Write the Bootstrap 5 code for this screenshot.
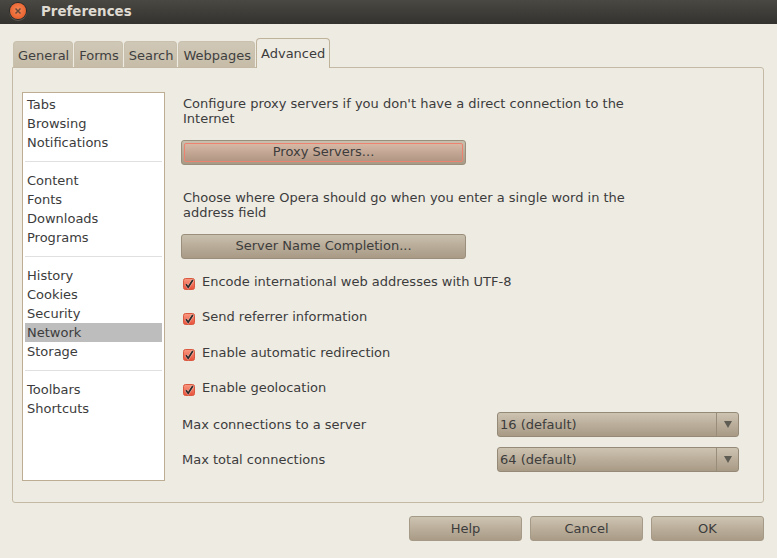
<!DOCTYPE html>
<html lang="en">
<head>
<meta charset="utf-8">
<title>Preferences</title>
<link href="https://cdn.jsdelivr.net/npm/bootstrap@5.3.0/dist/css/bootstrap.min.css" rel="stylesheet">
<style>
html,body{height:100%;}
body{width:777px;height:558px;overflow:hidden;background:#eeebe3;color:#3c3c3c;font-family:"DejaVu Sans",sans-serif;font-size:13px;line-height:15px;}
.win-title{height:24px;background:linear-gradient(#4a4843,#34322e);padding-left:10px;padding-bottom:2px;gap:15px;}
.win-close{width:16px;height:16px;border-radius:50%;background:radial-gradient(circle at 50% 45%,#f78a58,#e9602c 75%);box-shadow:0 0 0 1px #2c2a27,0 1px 0 1px #5c5954;}
.win-name{color:#dfdbd2;font-weight:700;font-size:13.4px;}
.win-body{padding:14px 13px 0 12px;}
.tab-strip{height:30px;padding-left:1px;gap:1px;align-items:flex-end;margin-bottom:-1px;position:relative;z-index:1;}
.tab-off{height:26px;background:linear-gradient(#d0c8b7,#c6bca8);border:1px solid #c9c0ae;border-bottom:0;border-radius:4px 4px 0 0;padding:6px 3px 0 4px;color:#3f3f3f;margin-bottom:1px;}
.tab-on{height:30px;background:#eeebe3;border:1px solid #bfb29b;border-bottom:0;border-radius:4px 4px 0 0;padding:7px 4px 0 4px;}
.pane{height:436px;border:1px solid #c4b9a4;border-radius:0 3px 3px 3px;padding:24px 24px 20px 9px;}
.side{width:143px;height:389px;background:#fff;border:1px solid #bdae93;padding:2px;flex:none;margin-right:16px;}
.side-item{height:19px;line-height:19px;padding-left:2px;color:#3c3c3c;}
.side-item.is-sel{background:#bdbdbd;}
.side-sep{height:1px;background:#e0e0de;margin:9px 0 9px;}
.main-col{flex:1;min-width:0;}
.para{width:470px;padding-left:2px;margin:0;line-height:15px;}
.para-first{margin-top:4px;}
.para-gap{margin-top:25px;}
.push{width:285px;height:25px;border:1px solid #9a8f7c;border-radius:3px;background:linear-gradient(#c9bfad,#a89a85);text-align:center;line-height:22px;color:#3c3c3c;padding:0;}
.push.is-focus{margin-top:14px;padding:2px;}
.focus-in{height:19px;border:1px solid #ee8270;border-radius:2px;background:linear-gradient(#d6b8a5,#b09683);line-height:16px;}
.push-gap{margin-top:14px;}
.tick-row{height:16px;margin-top:19.4px;gap:7px;padding-left:2px;}
.tick-first{margin-top:15px;}
.tick{width:12px;height:12px;flex:none;margin-top:4px;overflow:visible;}
.pick-row{height:25px;justify-content:space-between;padding-left:1px;}
.pick-first{margin-top:16px;}
.pick-next{margin-top:10px;}
.pick{width:242px;height:25px;border:1px solid #958a77;border-radius:3px;background:linear-gradient(#cdc3b1,#a89a85);padding-left:2px;line-height:23px;}
.pick-arrow{width:22px;border-left:1px solid #988d7a;}
.foot{gap:8px;padding:13px 0 0;justify-content:flex-end;}
.foot-btn{width:113px;height:25px;border:1px solid #a59a87;border-radius:3px;background:linear-gradient(#cdc3b1,#a99b86);text-align:center;line-height:23px;padding:0;color:#3c3c3c;}
</style>
</head>
<body>
<svg width="0" height="0" class="d-block">
  <defs>
    <linearGradient id="tickfill" x1="0" y1="0" x2="0" y2="1"><stop offset="0" stop-color="#fa9a82"/><stop offset="1" stop-color="#e8503a"/></linearGradient>
    <symbol id="tickmark" viewBox="0 0 12 12"><rect x=".5" y=".5" width="11" height="11" rx="2" fill="url(#tickfill)" stroke="#d9583f"/><path d="M3 6.200l2.200 3L9.800 2" stroke="#fff" stroke-opacity=".45" stroke-width="2.800" fill="none"/><path d="M3 6.200l2.200 3L9.800 2" stroke="#2b2b2b" stroke-width="1.700" fill="none"/></symbol>
  </defs>
</svg>
<div class="win-title d-flex align-items-center">
  <span class="win-close d-flex align-items-center justify-content-center">
    <svg width="8" height="8" viewBox="0 0 8 8"><path d="M1.500 1.500l5 5M6.500 1.500l-5 5" stroke="#6b4a3a" stroke-width="1.500" fill="none"/></svg>
  </span>
  <span class="win-name">Preferences</span>
</div>
<div class="win-body">
  <div class="tab-strip d-flex">
    <div class="tab-off">General</div>
    <div class="tab-off">Forms</div>
    <div class="tab-off">Search</div>
    <div class="tab-off">Webpages</div>
    <div class="tab-on">Advanced</div>
  </div>
  <div class="pane d-flex">
    <div class="side">
      <div class="side-item">Tabs</div>
      <div class="side-item">Browsing</div>
      <div class="side-item">Notifications</div>
      <div class="side-sep"></div>
      <div class="side-item">Content</div>
      <div class="side-item">Fonts</div>
      <div class="side-item">Downloads</div>
      <div class="side-item">Programs</div>
      <div class="side-sep"></div>
      <div class="side-item">History</div>
      <div class="side-item">Cookies</div>
      <div class="side-item">Security</div>
      <div class="side-item is-sel">Network</div>
      <div class="side-item">Storage</div>
      <div class="side-sep"></div>
      <div class="side-item">Toolbars</div>
      <div class="side-item">Shortcuts</div>
    </div>
    <div class="main-col">
      <p class="para para-first">Configure proxy servers if you don't have a direct connection to the Internet</p>
      <div class="push is-focus"><div class="focus-in">Proxy Servers...</div></div>
      <p class="para para-gap">Choose where Opera should go when you enter a single word in the address field</p>
      <div class="push push-gap">Server Name Completion...</div>
      <div class="tick-row tick-first d-flex"><svg class="tick"><use href="#tickmark"/></svg><span>Encode international web addresses with UTF-8</span></div>
      <div class="tick-row d-flex"><svg class="tick"><use href="#tickmark"/></svg><span>Send referrer information</span></div>
      <div class="tick-row d-flex"><svg class="tick"><use href="#tickmark"/></svg><span>Enable automatic redirection</span></div>
      <div class="tick-row d-flex"><svg class="tick"><use href="#tickmark"/></svg><span>Enable geolocation</span></div>
      <div class="pick-row d-flex align-items-center pick-first"><span>Max connections to a server</span><div class="pick d-flex"><span class="flex-grow-1">16 (default)</span><span class="pick-arrow d-flex align-items-center justify-content-center"><svg width="8" height="7" viewBox="0 0 8 7"><path d="M0 0h8L4 7z" fill="#5f5c54"/></svg></span></div></div>
      <div class="pick-row d-flex align-items-center pick-next"><span>Max total connections</span><div class="pick d-flex"><span class="flex-grow-1">64 (default)</span><span class="pick-arrow d-flex align-items-center justify-content-center"><svg width="8" height="7" viewBox="0 0 8 7"><path d="M0 0h8L4 7z" fill="#5f5c54"/></svg></span></div></div>
    </div>
  </div>
  <div class="foot d-flex">
    <div class="foot-btn">Help</div>
    <div class="foot-btn">Cancel</div>
    <div class="foot-btn">OK</div>
  </div>
</div>
</body>
</html>
